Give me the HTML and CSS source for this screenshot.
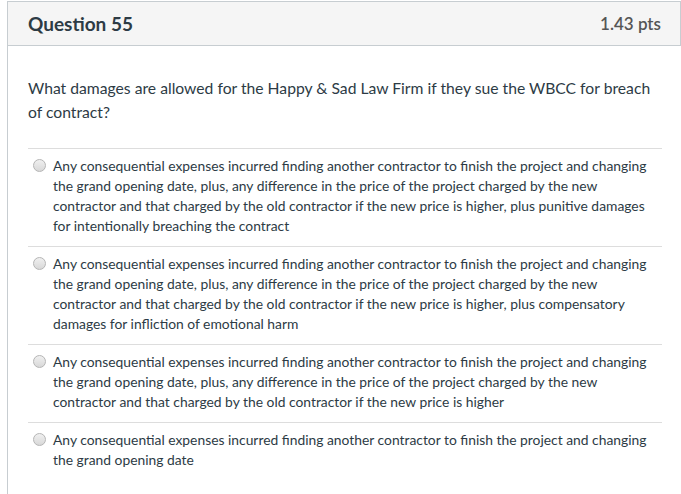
FILE: index.html
```html
<!DOCTYPE html>
<html>
<head>
<meta charset="utf-8">
<link rel="stylesheet" href="styles.css">
</head>
<body>
<div class="quiz">
  <div class="header">
    <h2 class="title">Question 55</h2>
    <span class="pts">1.43 pts</span>
  </div>
  <div class="content">
    <p class="question">What damages are allowed for the Happy &amp; Sad Law Firm if they sue the WBCC for breach of contract?</p>
    <div class="answers">
      <label class="answer"><span class="radio"></span><span class="atext">Any consequential expenses incurred finding another contractor to finish the project and changing the grand opening date, plus, any difference in the price of the project charged by the new contractor and that charged by the old contractor if the new price is higher, plus punitive damages for intentionally breaching the contract</span></label>
      <label class="answer"><span class="radio"></span><span class="atext">Any consequential expenses incurred finding another contractor to finish the project and changing the grand opening date, plus, any difference in the price of the project charged by the new contractor and that charged by the old contractor if the new price is higher, plus compensatory damages for infliction of emotional harm</span></label>
      <label class="answer"><span class="radio"></span><span class="atext">Any consequential expenses incurred finding another contractor to finish the project and changing the grand opening date, plus, any difference in the price of the project charged by the new contractor and that charged by the old contractor if the new price is higher</span></label>
      <label class="answer"><span class="radio"></span><span class="atext">Any consequential expenses incurred finding another contractor to finish the project and changing the grand opening date</span></label>
    </div>
  </div>
</div>
</body>
</html>
```
FILE: styles.css
```css
html, body {
  margin: 0;
  padding: 0;
  background: #fff;
}
body {
  font-family: Lato, "Open Sans", sans-serif;
  color: #2d3b45;
  overflow: hidden;
}
.quiz {
  margin: 1px 0 0 7px;
  border-left: 1px solid #c7cdd1;
  height: 493px;
  box-sizing: border-box;
}
.header {
  display: flex;
  justify-content: space-between;
  align-items: center;
  height: 45px;
  box-sizing: border-box;
  background: #f5f5f5;
  border-top: 1px solid #c7cdd1;
  border-right: 1px solid #c7cdd1;
  border-bottom: 1px solid #c7cdd1;
  padding: 0 19px 0 20px;
}
.title {
  margin: 0;
  font-size: 19px;
  font-weight: 700;
  color: #2d3b45;
}
.pts {
  font-size: 17px;
  font-weight: 600;
  color: #555;
}
.content {
  padding: 30px 19px 0 20px;
}
.question {
  margin: 0 0 24px;
  font-size: 15.7px;
  line-height: 24px;
}
.answers {
  display: flex;
  flex-direction: column;
}
.answer {
  display: flex;
  align-items: flex-start;
  gap: 7px;
  border-top: 1px solid #dddddd;
  padding: 7px 0 10px 5px;
  font-size: 13.85px;
  line-height: 20px;
}
.radio {
  flex: none;
  width: 13px;
  height: 13px;
  margin-top: 3px;
  box-sizing: border-box;
  border-radius: 50%;
  border: 1px solid #b5b5b5;
  background: linear-gradient(#f0f0f0, #d8d8d8);
}
.atext {
  flex: 1;
}
```
